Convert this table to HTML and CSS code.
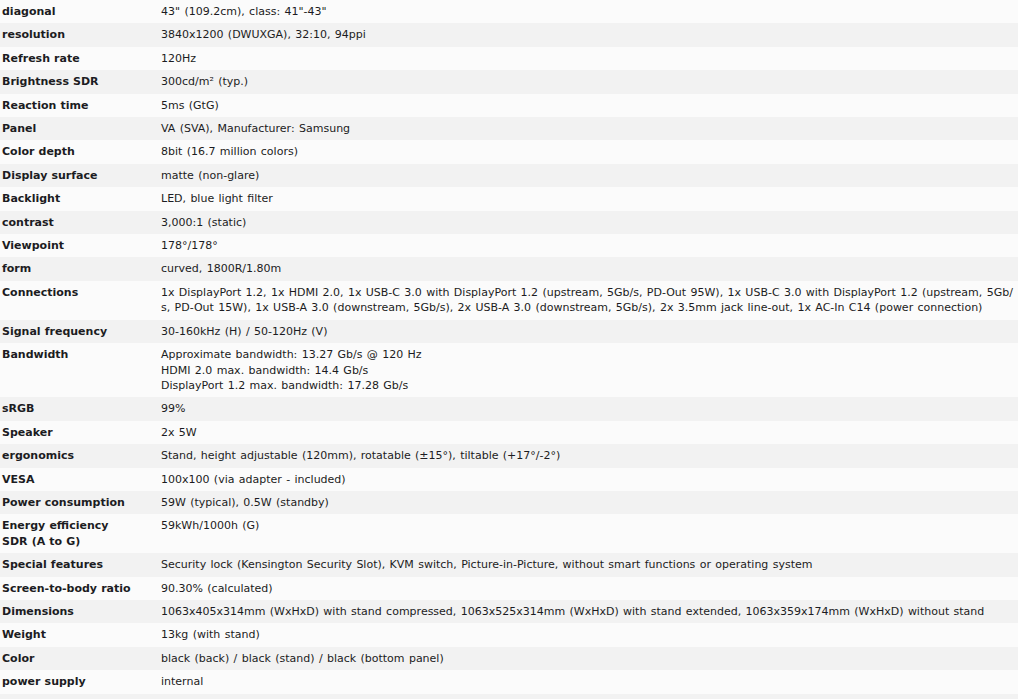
FILE: index.html
```html
<!DOCTYPE html>
<html>
<head>
<meta charset="utf-8">
<link rel="stylesheet" href="styles.css">
</head>
<body>
<table class="specs">
<tbody>
<tr><th>diagonal</th><td>43" (109.2cm), class: 41"-43"</td></tr>
<tr><th>resolution</th><td>3840x1200 (DWUXGA), 32:10, 94ppi</td></tr>
<tr><th>Refresh rate</th><td>120Hz</td></tr>
<tr><th>Brightness SDR</th><td>300cd/m² (typ.)</td></tr>
<tr><th>Reaction time</th><td>5ms (GtG)</td></tr>
<tr><th>Panel</th><td>VA (SVA), Manufacturer: Samsung</td></tr>
<tr><th>Color depth</th><td>8bit (16.7 million colors)</td></tr>
<tr><th>Display surface</th><td>matte (non-glare)</td></tr>
<tr><th>Backlight</th><td>LED, blue light filter</td></tr>
<tr><th>contrast</th><td>3,000:1 (static)</td></tr>
<tr><th>Viewpoint</th><td>178°/178°</td></tr>
<tr><th>form</th><td>curved, 1800R/1.80m</td></tr>
<tr><th>Connections</th><td>1x DisplayPort 1.2, 1x HDMI 2.0, 1x USB-C 3.0 with DisplayPort 1.2 (upstream, 5Gb/s, PD-Out 95W), 1x USB-C 3.0 with DisplayPort 1.2 (upstream, 5Gb/<wbr>s, PD-Out 15W), 1x USB-A 3.0 (downstream, 5Gb/s), 2x USB-A 3.0 (downstream, 5Gb/s), 2x 3.5mm jack line-out, 1x AC-In C14 (power connection)</td></tr>
<tr><th>Signal frequency</th><td>30-160kHz (H) / 50-120Hz (V)</td></tr>
<tr><th>Bandwidth</th><td>Approximate bandwidth: 13.27 Gb/s @ 120 Hz<br>HDMI 2.0 max. bandwidth: 14.4 Gb/s<br>DisplayPort 1.2 max. bandwidth: 17.28 Gb/s</td></tr>
<tr><th>sRGB</th><td>99%</td></tr>
<tr><th>Speaker</th><td>2x 5W</td></tr>
<tr><th>ergonomics</th><td>Stand, height adjustable (120mm), rotatable (±15°), tiltable (+17°/-2°)</td></tr>
<tr><th>VESA</th><td>100x100 (via adapter - included)</td></tr>
<tr><th>Power consumption</th><td>59W (typical), 0.5W (standby)</td></tr>
<tr><th>Energy efficiency SDR (A to G)</th><td>59kWh/1000h (G)</td></tr>
<tr><th>Special features</th><td>Security lock (Kensington Security Slot), KVM switch, Picture-in-Picture, without smart functions or operating system</td></tr>
<tr><th>Screen-to-body ratio</th><td>90.30% (calculated)</td></tr>
<tr><th>Dimensions</th><td>1063x405x314mm (WxHxD) with stand compressed, 1063x525x314mm (WxHxD) with stand extended, 1063x359x174mm (WxHxD) without stand</td></tr>
<tr><th>Weight</th><td>13kg (with stand)</td></tr>
<tr><th>Color</th><td>black (back) / black (stand) / black (bottom panel)</td></tr>
<tr><th>power supply</th><td>internal</td></tr>
<tr><th>&nbsp;</th><td>&nbsp;</td></tr>
</tbody>
</table>
</body>
</html>
```
FILE: styles.css
```css
html, body {
  margin: 0;
  padding: 0;
  background: #fafafa;
}
body {
  font-family: Verdana, "DejaVu Sans", sans-serif;
  font-size: 11px;
  line-height: 15.4px;
  word-spacing: 0.85px;
  color: #1c1c22;
}
.specs {
  width: 1018px;
  border-collapse: collapse;
  margin-top: 0;
}
.specs th,
.specs td {
  text-align: left;
  vertical-align: top;
  padding: 4px 0;
}
.specs th {
  width: 132px;
  padding-left: 2px;
  padding-right: 27px;
  font-weight: bold;
  word-spacing: 0.3px;
}
.specs tr:nth-child(odd) {
  background: #fbfbfb;
}
.specs tr:nth-child(even) {
  background: #f2f2f2;
}
```
